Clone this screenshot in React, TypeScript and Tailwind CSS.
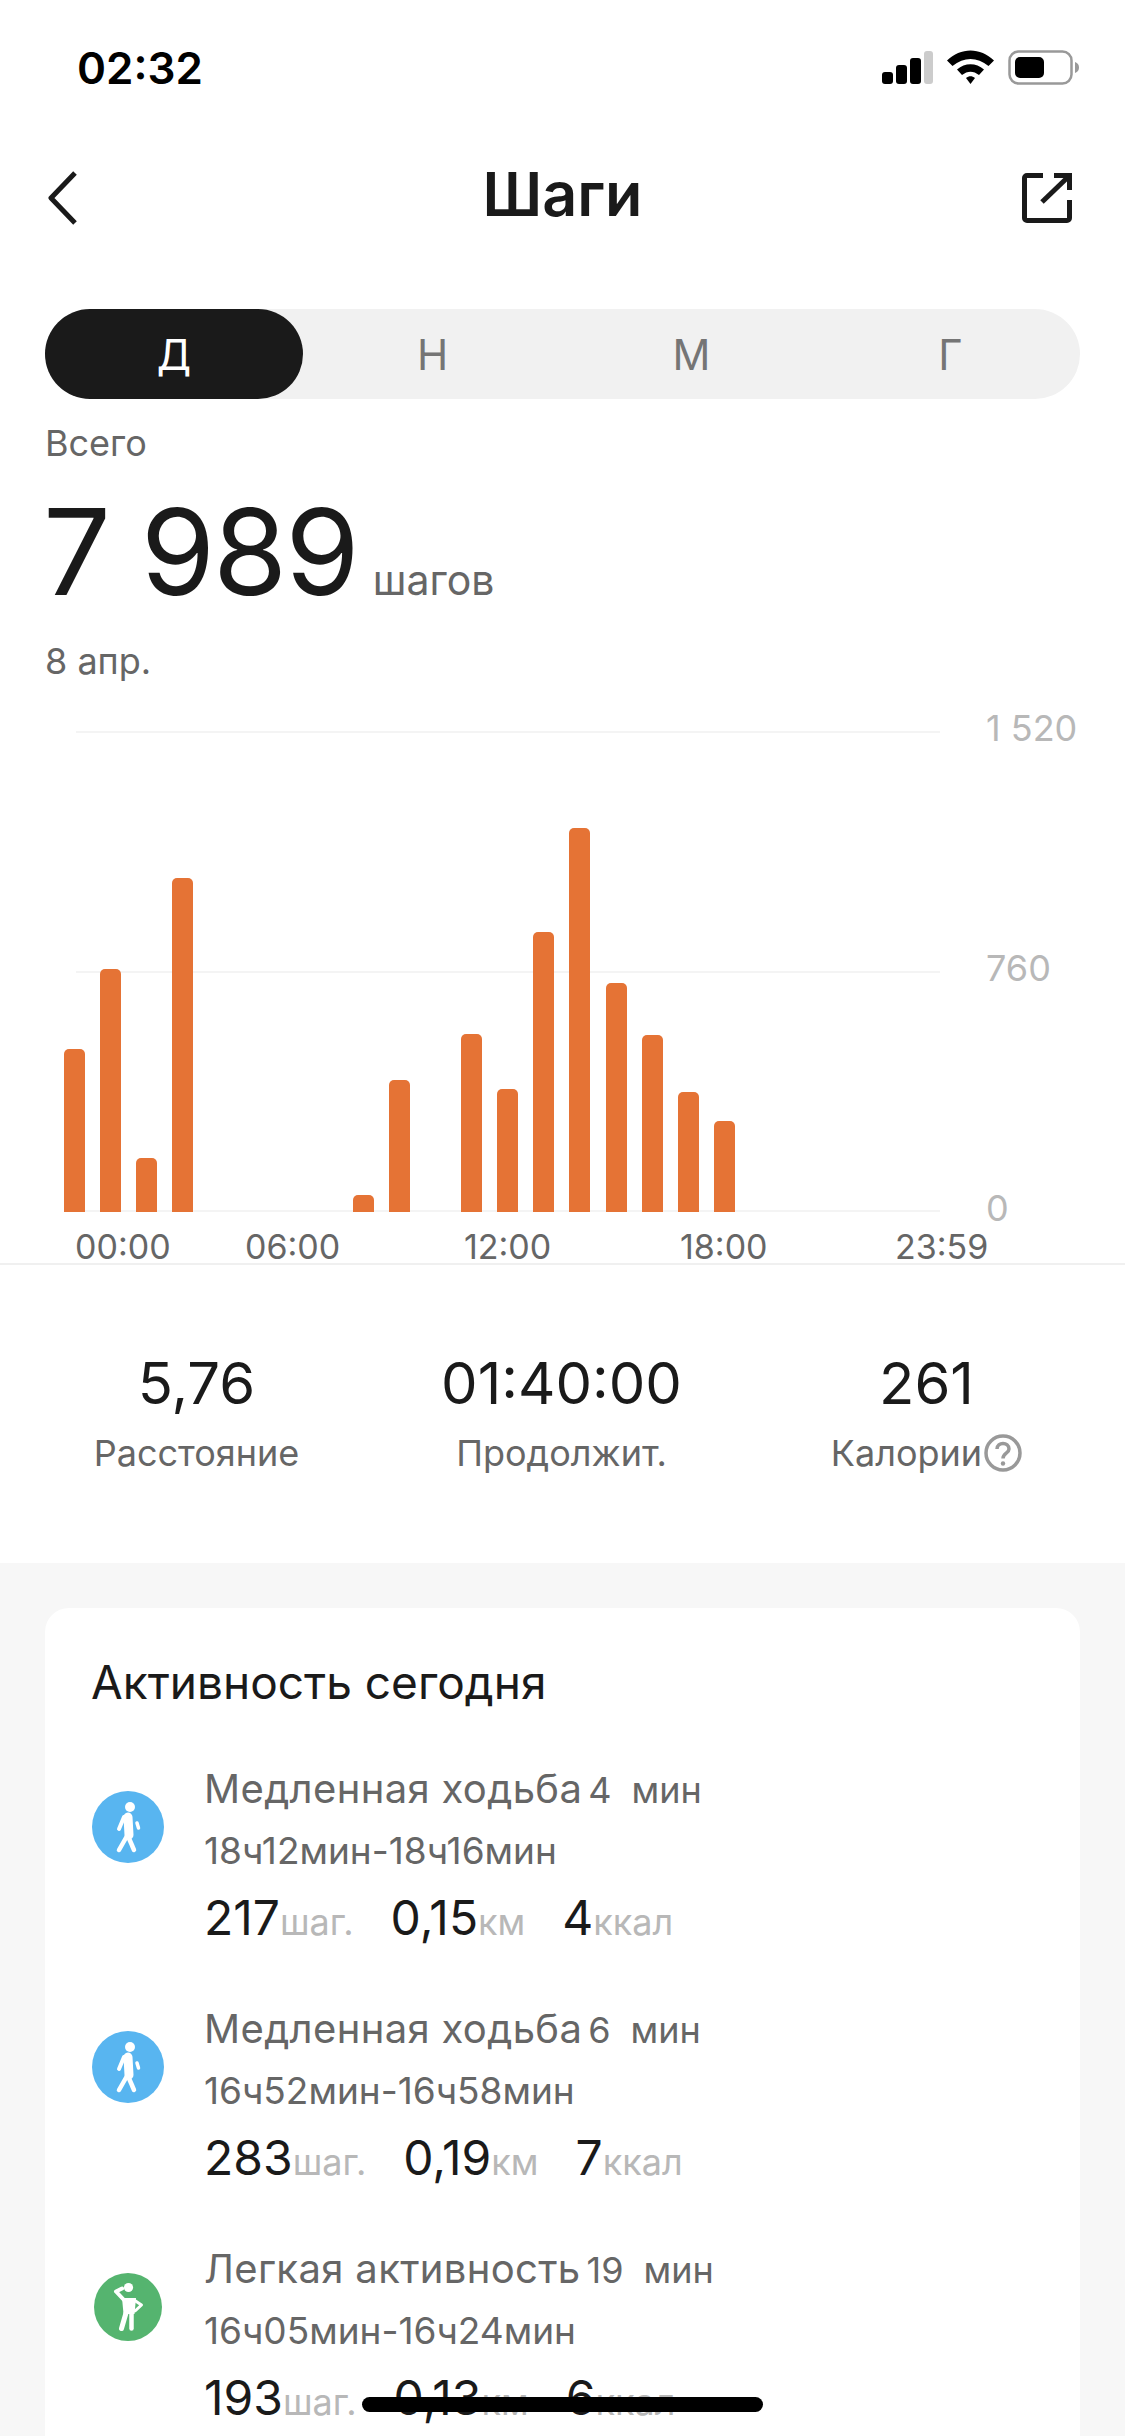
import React from "react";

const bars: { left: number; top: number }[] = [
  { left: 64, top: 1049 }, { left: 100, top: 969 }, { left: 136, top: 1158 }, { left: 172, top: 878 },
  { left: 353, top: 1195 }, { left: 389, top: 1080 }, { left: 461, top: 1034 }, { left: 497, top: 1089 },
  { left: 533, top: 932 }, { left: 569, top: 828 }, { left: 606, top: 983 }, { left: 642, top: 1035 },
  { left: 678, top: 1092 }, { left: 714, top: 1121 },
];

function Walker() {
  return (
    <svg viewBox="0 0 72 72" className="w-[72px] h-[72px]">
      <circle cx="36" cy="36" r="36" fill="#58b5f0" />
      <circle cx="38" cy="16" r="5" fill="#fff" />
      <g stroke="#fff" strokeLinecap="round" strokeLinejoin="round" fill="none">
        <path d="M36 26 L37 44" strokeWidth="9" />
        <path d="M32 26 L27 38" strokeWidth="4" />
        <path d="M45 32 L46.5 37" strokeWidth="3.5" />
        <path d="M35 45 L27 59" strokeWidth="4.5" />
        <path d="M36 45 L42 59" strokeWidth="4.5" />
      </g>
    </svg>
  );
}

function Stander() {
  return (
    <svg viewBox="0 0 68 68" className="w-[68px] h-[68px]">
      <circle cx="34" cy="34" r="34" fill="#55b46f" />
      <circle cx="34.5" cy="14.5" r="4.6" fill="#fff" />
      <path d="M28 25 H42 L40.500 41 H29.500 Z" fill="#fff" />
      <g stroke="#fff" strokeLinecap="round" strokeLinejoin="round" fill="none">
        <path d="M28 15.500 L22 18.500 L30 27" strokeWidth="4" />
        <path d="M40 27 L47.500 32 L41 38" strokeWidth="3" />
        <path d="M32 40 L27.500 55.500" strokeWidth="5" />
        <path d="M37.500 40 L37.500 55.500" strokeWidth="4.500" />
      </g>
    </svg>
  );
}

type Row = {
  icon: "walk" | "stand";
  name: string;
  dur: string;
  range: string;
  steps: string;
  km: string;
  kcal: string;
};

const rows: Row[] = [
  { icon: "walk", name: "Медленная ходьба", dur: "4", range: "18ч12мин-18ч16мин", steps: "217", km: "0,15", kcal: "4" },
  { icon: "walk", name: "Медленная ходьба", dur: "6", range: "16ч52мин-16ч58мин", steps: "283", km: "0,19", kcal: "7" },
  { icon: "stand", name: "Легкая активность", dur: "19", range: "16ч05мин-16ч24мин", steps: "193", km: "0,13", kcal: "6" },
];

function Activity({ r }: { r: Row }) {
  return (
    <div className="flex h-[240px] items-start">
      <div className="w-[113px] shrink-0 h-[134px] flex items-center">
        <div className="w-[72px] flex justify-center">{r.icon === "walk" ? <Walker /> : <Stander />}</div>
      </div>
      <div className="-ml-[1px]">
        <div className="flex items-baseline h-[60px] leading-[58px] text-[#666666]">
          <span className="text-[40px] tracking-[0.35px]">{r.name}</span>
          <span className="text-[36px] ml-[6px]">{r.dur}</span>
          <span className="text-[36px] ml-[20px]">мин</span>
        </div>
        <div className="h-[62px] leading-[62px] text-[37px] text-[#666666]">{r.range}</div>
        <div className="flex items-baseline h-[72px] leading-[72px]">
          <span className="text-[48px] text-[#1a1a1a]">{r.steps}</span>
          <span className="text-[36px] text-[#b8b8b8]">шаг.</span>
          <span className="text-[48px] text-[#1a1a1a] ml-[37px]">{r.km}</span>
          <span className="text-[36px] text-[#b8b8b8]">км</span>
          <span className="text-[48px] text-[#1a1a1a] ml-[37px]">{r.kcal}</span>
          <span className="text-[36px] text-[#b8b8b8]">ккал</span>
        </div>
      </div>
    </div>
  );
}

export default function App() {
  return (
    <div className="relative w-[1125px] h-[2436px] overflow-hidden bg-white font-['Inter',sans-serif] text-[#1a1a1a]">
      {/* status bar */}
      <div className="h-[136px] flex items-center justify-between pl-[77px] pr-[43px]">
        <span className="text-[44px] font-semibold text-black leading-none">02:32</span>
        <svg viewBox="0 0 200 36" className="w-[200px] h-[36px]">
          <rect x="0" y="22" width="11" height="12" rx="3" fill="#000" />
          <rect x="14" y="15" width="11" height="19" rx="3" fill="#000" />
          <rect x="28" y="8" width="11" height="26" rx="3" fill="#000" />
          <rect x="42" y="1" width="9" height="33" rx="3" fill="#cccccc" />
          <path d="M65 10.5 C78.500 -3 98.500 -3 112 10.5 L106.500 16 C95 6.5 82 6.5 70.500 16 Z" fill="#000" />
          <path d="M75 19.5 C83 12.5 94 12.5 102 19.5 L97 25 C91.5 20.5 85.500 20.500 80 25 Z" fill="#000" />
          <path d="M84 28 C87 25.500 90 25.500 93 28 L88.500 34 Z" fill="#000" />
          <rect x="127.500" y="1.500" width="62" height="32" rx="9" fill="none" stroke="#999999" strokeWidth="2.500" />
          <rect x="133" y="7" width="29" height="21" rx="5" fill="#000" />
          <path d="M193 12 C196 13 197 15 197 17.500 C197 20 196 22 193 23 Z" fill="#999999" />
        </svg>
      </div>

      {/* header */}
      <div className="relative h-[124px] flex items-center justify-center">
        <svg viewBox="0 0 30 54" className="absolute left-[48px] top-[35px] w-[30px] h-[54px]">
          <path d="M27 2 L3 27 L27 52" fill="none" stroke="#1a1a1a" strokeWidth="5" strokeLinejoin="round" />
        </svg>
        <span className="text-[61px] font-semibold leading-none -mt-[8px]">Шаги</span>
        <svg viewBox="0 0 52 52" className="absolute left-[1021px] top-[36px] w-[52px] h-[52px]">
          <path d="M22 3.500 H6 A2.500 2.500 0 0 0 3.500 6 V46 A2.500 2.500 0 0 0 6 48.500 H46 A2.500 2.500 0 0 0 48.500 46 V28" fill="none" stroke="#1a1a1a" strokeWidth="5" />
          <path d="M21 30 L46 6" fill="none" stroke="#1a1a1a" strokeWidth="5" />
          <path d="M33 3.500 H48.500 V18" fill="none" stroke="#1a1a1a" strokeWidth="5" />
        </svg>
      </div>

      {/* segment */}
      <div className="mt-[49px] mx-[45px] h-[90px] rounded-full bg-[#f1f1f1] flex text-[42px] text-[#757575]">
        <div className="w-[258px] rounded-full bg-[#1a1a1a] text-white flex items-center justify-center">Д</div>
        <div className="w-[259px] flex items-center justify-center">Н</div>
        <div className="w-[259px] flex items-center justify-center">М</div>
        <div className="w-[259px] flex items-center justify-center">Г</div>
      </div>

      {/* totals */}
      <div className="pl-[45px]">
        <div className="h-[88px] pt-[22px] text-[36px] leading-[44px] text-[#666666]">Всего</div>
        <div className="h-[147px] flex items-baseline leading-[130px] -ml-[2px]">
          <span className="text-[120px] leading-[130px] tracking-[-2px] text-[#1a1a1a]">7 989</span>
          <span className="text-[41px] text-[#666666] ml-[15px]">шагов</span>
        </div>
        <div className="h-[54px] text-[36px] leading-[54px] text-[#666666]">8 апр.</div>
      </div>

      {/* chart */}
      <div className="relative mt-[43px] h-[481px]">
        <div className="absolute left-[76px] right-[185px] top-0 border-t-2 border-[#f4f4f4]" />
        <div className="absolute left-[76px] right-[185px] top-[240px] border-t-2 border-[#f4f4f4]" />
        <div className="absolute left-[76px] right-[185px] top-[479px] border-t-2 border-[#f4f4f4]" />
        <span className="absolute left-[986px] top-[-25px] text-[36px] leading-[44px] text-[#b8b8b8]">1 520</span>
        <span className="absolute left-[986px] top-[215px] text-[36px] leading-[44px] text-[#b8b8b8]">760</span>
        <span className="absolute left-[986px] top-[455px] text-[36px] leading-[44px] text-[#b8b8b8]">0</span>
        {bars.map((b) => (
          <div
            key={b.left}
            className="absolute bottom-0 w-[21px] rounded-t-[5px] bg-[#e57335]"
            style={{ left: b.left, top: b.top - 731 }}
          />
        ))}
      </div>

      {/* x labels */}
      <div className="relative h-[51px] text-[34px] leading-[50px] text-[#666666]">
        <span className="absolute left-[75px] top-[10px]">00:00</span>
        <span className="absolute left-[245px] top-[10px]">06:00</span>
        <span className="absolute left-[464px] top-[10px]">12:00</span>
        <span className="absolute left-[680px] top-[10px]">18:00</span>
        <span className="absolute left-[895px] top-[10px]">23:59</span>
      </div>

      <div className="h-[2px] bg-[#f0f0f0]" />

      {/* stats */}
      <div className="h-[298px] grid grid-cols-[365px_365px_365px] pl-[14px] pt-[83px]">
        {[
          { v: "5,76", l: "Расстояние" },
          { v: "01:40:00", l: "Продолжит." },
          { v: "261", l: "Калории" },
        ].map((s) => (
          <div key={s.v} className="flex flex-col items-center">
            <span className="text-[58px] leading-[70px] text-[#1a1a1a]">{s.v}</span>
            <span className="flex items-center text-[36px] leading-[50px] mt-[10px] text-[#666666]">
              {s.l}
              {s.l === "Калории" && (
                <svg viewBox="0 0 38 38" className="w-[38px] h-[38px] ml-[2px]">
                  <circle cx="19" cy="19" r="17" fill="none" stroke="#999999" strokeWidth="3.500" />
                  <path d="M13 15 C13 7.500 25 7.500 25 15 C25 19.500 19 19 19 24.500" fill="none" stroke="#999999" strokeWidth="3.500" />
                  <circle cx="19" cy="29.500" r="2.200" fill="#999999" />
                </svg>
              )}
            </span>
          </div>
        ))}
      </div>

      {/* activity */}
      <div className="h-[900px] bg-[#f7f7f7] pt-[45px] px-[45px]">
        <div className="h-[855px] rounded-t-[24px] bg-white pl-[47px] pt-[46px]">
          <div className="text-[46px] leading-[56px] text-[#1a1a1a] mb-[50px] -ml-[1px]">Активность сегодня</div>
          {rows.map((r) => (
            <Activity key={r.range} r={r} />
          ))}
        </div>
      </div>

      {/* home indicator */}
      <div className="absolute left-[362px] top-[2397px] w-[401px] h-[15px] rounded-full bg-black" />
    </div>
  );
}
